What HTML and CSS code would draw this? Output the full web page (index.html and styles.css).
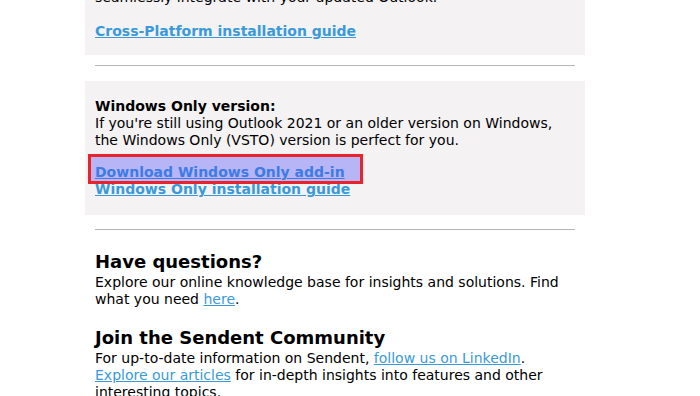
FILE: index.html
```html
<!DOCTYPE html>
<html lang="en">
  <head>
    <meta charset="UTF-8" />
    <title>Sendent for Outlook</title>
    <link rel="stylesheet" href="styles.css">
  </head>
  <body>
    <div class="mail">
      <div class="panel panel-top">
        <p>seamlessly integrate with your updated Outlook.</p>
        <p class="links">
          <a href="#">Cross-Platform installation guide</a>
        </p>
      </div>

      <hr />

      <div class="panel panel-vsto">
        <p>
          <strong>Windows Only version:</strong><br />
          If you're still using Outlook 2021 or an older version on Windows,
          the Windows Only (VSTO) version is perfect for you.
        </p>
        <p class="links">
          <span class="highlighted">
            <a href="#">Download Windows Only add-in</a>
            <span class="highlight-box"></span>
          </span><br />
          <a href="#">Windows Only installation guide</a>
        </p>
      </div>

      <hr class="hr-wide" />

      <div class="section section-first">
        <h2>Have questions?</h2>
        <p>
          Explore our online knowledge base for insights and solutions. Find
          what you need <a class="plain" href="#">here</a>.
        </p>
      </div>

      <div class="section">
        <h2>Join the Sendent Community</h2>
        <p>
          For up-to-date information on Sendent,
          <a class="plain" href="#">follow us on LinkedIn</a>.
          <a class="plain" href="#">Explore our articles</a> for in-depth
          insights into features and other interesting topics.
        </p>
      </div>
    </div>
  </body>
</html>
```

FILE: styles.css
```css
body {
  margin: 0;
  font-family: "DejaVu Sans", sans-serif;
  font-size: 14px;
  line-height: 17px;
  color: #000;
  background: #fff;
}
.mail {
  width: 500px;
  margin-left: 85px;
  margin-top: -26px;
}
.panel {
  background: #f4f2f3;
  padding: 15px 10px 16px;
}
.panel-top {
  padding-bottom: 15px;
}
.panel-vsto {
  padding-top: 17px;
  padding-bottom: 17px;
}
.panel p {
  margin: 0;
}
.panel .links {
  margin-top: 17px;
}
.panel-vsto .links {
  margin-top: 15px;
}
.links a {
  color: #3a9ad9;
  font-weight: bold;
  font-size: 14px;
}
hr {
  border: none;
  border-top: 1px solid #b5b5b5;
  margin: 10px 10px 15px;
}
.hr-wide {
  margin-top: 14px;
}
.highlighted {
  position: relative;
}
.highlight-box {
  position: absolute;
  left: -7px;
  top: -10px;
  width: 269px;
  height: 24px;
  border: 3px solid #e8232b;
  background: rgba(67, 65, 252, 0.34);
}
.section {
  padding: 0 10px;
  margin-top: 18px;
}
.section-first {
  margin-top: 20px;
}
.section h2 {
  margin: 0;
  font-size: 18px;
  line-height: 24px;
}
.section p {
  margin: 0;
}
a.plain {
  color: #3a9ad9;
}
```
